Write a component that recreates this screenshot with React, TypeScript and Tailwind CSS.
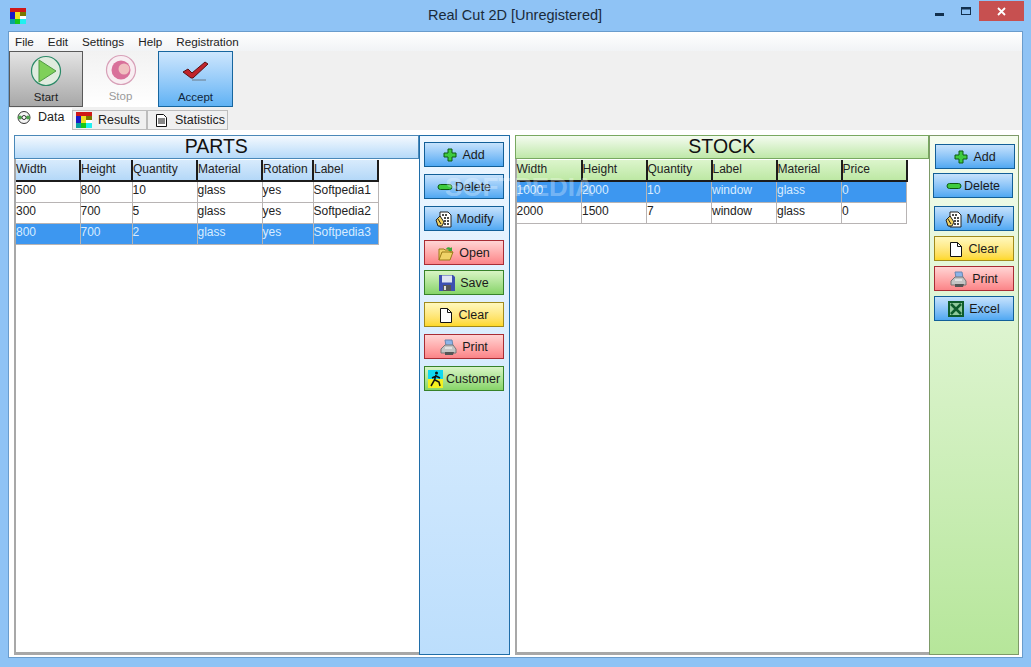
const font = { fontFamily: '"Liberation Sans", Arial, sans-serif' };

const AppLogo = ({ size = 16 }: { size?: number }) => (
  <svg width={size} height={size} viewBox="0 0 16 16" className="shrink-0">
    <rect width="16" height="4" fill="#d01818" />
    <rect y="4" width="5" height="7" fill="#1818c8" />
    <rect x="5" y="4" width="5" height="7" fill="#f0e020" />
    <rect x="10" y="4" width="6" height="4" fill="#787800" />
    <rect x="10" y="8" width="6" height="3" fill="#fff" />
    <rect y="11" width="5" height="5" fill="#08a0a0" />
    <rect x="5" y="11" width="5" height="5" fill="#18c818" />
    <rect x="10" y="11" width="6" height="5" fill="#20f0f0" />
  </svg>
);

const PlusIcon = () => (
  <svg width="14" height="14" viewBox="0 0 14 14">
    <path d="M5 1h4v4h4v4H9v4H5V9H1V5h4z" fill="#3ecb3e" stroke="#0c5a12" strokeWidth="1" strokeLinejoin="round" />
  </svg>
);
const MinusIcon = () => (
  <svg width="16" height="8" viewBox="0 0 16 8">
    <rect x="1" y="1.5" width="14" height="5" rx="2.5" fill="#3ecb3e" stroke="#0c5a12" />
  </svg>
);
const ModifyIcon = () => (
  <svg width="17" height="17" viewBox="0 0 17 17">
    <path d="M5 1h8l3 3v12H5z" fill="#fff" stroke="#222" />
    <path d="M7 4h6M9 7h6M9 10h6M9 13h6" stroke="#111" strokeWidth="1.300" strokeDasharray="2 1" />
    <path d="M1 9l4-4 4 6-2 4H3z" fill="#f0d060" stroke="#222" />
    <path d="M3 8l3 5" stroke="#222" />
  </svg>
);
const OpenIcon = () => (
  <svg width="16" height="15" viewBox="0 0 16 15">
    <path d="M1 3h5l1 1h5v2l3 0-3 8H1z" fill="#f0d268" stroke="#9a7a18" />
    <path d="M1 14l3-8h11" fill="none" stroke="#9a7a18" />
    <path d="M8 3c1-2 3-2 5-1l1-1v4h-4l1-1c-1-1-2-1-3-1z" fill="#3aa83a" />
  </svg>
);
const SaveIcon = () => (
  <svg width="16" height="16" viewBox="0 0 16 16">
    <path d="M0 0h14l2 2v14H0z" fill="#3d4fb0" />
    <rect x="3" y="0.500" width="10" height="7" fill="#dfe4f2" />
    <rect x="4" y="10" width="8" height="6" fill="#555" />
    <rect x="5" y="11" width="2" height="4" fill="#ddd" />
  </svg>
);
const PageIcon = () => (
  <svg width="12" height="15" viewBox="0 0 12 15">
    <path d="M.500.500h7l4 4v10h-11z" fill="#fff" stroke="#111" />
    <path d="M7.500.500v4h4" fill="none" stroke="#111" />
  </svg>
);
const PrintIcon = () => (
  <svg width="17" height="17" viewBox="0 0 17 17">
    <path d="M5 1h7l1 6H6z" fill="#8db4e8" stroke="#6a86b0" />
    <path d="M1 10l4-4h8l3 4v4H1z" fill="#c4c4c4" stroke="#777" />
    <path d="M5 13h9l-1 3H5z" fill="#555" />
    <path d="M5 9h7" stroke="#fff" />
  </svg>
);
const RunnerIcon = () => (
  <svg width="15" height="18" viewBox="0 0 15 18">
    <rect width="15" height="9" fill="#10d8f0" />
    <rect y="9" width="15" height="9" fill="#f4f020" />
    <circle cx="8.500" cy="3" r="1.500" fill="#111" />
    <path d="M8 5L6.500 10 3 16M7 10l4 2 1 4M8 6l4 2M8 6L4 8" stroke="#111" strokeWidth="1.500" fill="none" />
  </svg>
);
const ExcelIcon = () => (
  <svg width="16" height="16" viewBox="0 0 16 16">
    <rect width="16" height="16" fill="#0d5c2c" />
    <rect x="2" y="2" width="12" height="12" fill="#8fc99c" />
    <path d="M3 3l10 10M13 3L3 13" stroke="#0d5c2c" strokeWidth="2.500" />
  </svg>
);

type Tone = "blue" | "red" | "green" | "yellow";

const toneClass: Record<Tone, string> = {
  blue: "border-[#125f98] bg-gradient-to-b from-[#c6e2fc] to-[#4fa8f2]",
  red: "border-[#a82c34] bg-gradient-to-b from-[#ffd4d4] to-[#fb8488]",
  green: "border-[#37822a] bg-gradient-to-b from-[#d8f4c4] to-[#86d468]",
  yellow: "border-[#a08a1c] bg-gradient-to-b from-[#fff8bc] to-[#fed824]",
};

const ActionButton = ({
  label,
  tone,
  icon,
  className = "",
  gap = "gap-[5px]",
}: {
  label: string;
  tone: Tone;
  icon: React.ReactNode;
  className?: string;
  gap?: string;
}) => (
  <button
    className={`flex h-[25px] w-[80px] shrink-0 items-center justify-center border pt-[1px] text-[12.500px] text-[#1a1a1a] ${gap} ${toneClass[tone]} ${className}`}
  >
    {icon}
    <span>{label}</span>
  </button>
);

const ToolButton = ({
  label,
  className,
  labelClass = "text-[#222]",
  children,
}: {
  label: string;
  className: string;
  labelClass?: string;
  children: React.ReactNode;
}) => (
  <div className={`flex h-[56px] flex-col items-center pt-[3px] ${className}`}>
    <div className="flex h-[32px] items-center justify-center">{children}</div>
    <span className={`mt-[3px] text-[11.500px] leading-[14px] ${labelClass}`}>{label}</span>
  </div>
);

const DataTable = ({
  headers,
  rows,
  widths,
  selected,
  headerClass,
}: {
  headers: string[];
  rows: string[][];
  widths: number[];
  selected: number;
  headerClass: string;
}) => (
  <table className="table-fixed border-collapse text-[12px]">
    <colgroup>
      {widths.map((w, i) => (
        <col key={i} style={{ width: w }} />
      ))}
    </colgroup>
    <thead>
      <tr>
        {headers.map((h) => (
          <th
            key={h}
            className={`h-[20px] border-r-2 border-b-2 border-[#1c1c1c] pb-[2px] text-left align-middle font-normal text-[#222] ${headerClass}`}
          >
            {h}
          </th>
        ))}
      </tr>
    </thead>
    <tbody>
      {rows.map((row, r) => (
        <tr key={r}>
          {row.map((c, i) => (
            <td
              key={i}
              className={`h-[21px] border-r border-b border-[#b8b4b4] pb-[3px] leading-none ${
                r === selected ? "bg-[#3d97f0] text-[#d8ecff]" : "bg-white text-[#222]"
              }`}
            >
              {c}
            </td>
          ))}
        </tr>
      ))}
    </tbody>
  </table>
);

export default function App() {
  return (
    <div
      className="flex h-[667px] w-[1031px] flex-col overflow-hidden bg-[#8fc3f5] px-[8px] pb-[9px]"
      style={font}
    >
      <header className="relative flex h-[31px] shrink-0 items-center pl-[2px]">
        <AppLogo />
        <span className="ml-[402px] text-[14.500px] text-[#1a2a3a]">Real Cut 2D [Unregistered]</span>
        <svg width="9" height="4" viewBox="0 0 9 4" className="absolute top-[12px] left-[927px]">
          <rect width="9" height="3" y="1" fill="#12304e" />
        </svg>
        <svg width="10" height="8" viewBox="0 0 10 8" className="absolute top-[7px] left-[953px]">
          <rect x=".500" y=".500" width="9" height="7" fill="none" stroke="#12304e" />
          <rect x=".500" y=".500" width="9" height="2" fill="#12304e" />
        </svg>
        <div className="absolute top-[1px] right-[-1px] flex h-[20px] w-[45px] items-center justify-center bg-[#c75050]">
          <svg width="9" height="9" viewBox="0 0 9 9">
            <path d="M1 1l7 7M8 1L1 8" stroke="#fff" strokeWidth="1.800" />
          </svg>
        </div>
      </header>

      <main className="relative flex min-h-0 flex-1 flex-col border border-[#6a9ccc] bg-white">
        <nav className="flex h-[19px] shrink-0 items-center gap-[14px] bg-gradient-to-b from-white to-[#f1f3f5] pl-[6px] text-[11.700px] text-[#222]">
          <span>File</span>
          <span>Edit</span>
          <span>Settings</span>
          <span>Help</span>
          <span>Registration</span>
        </nav>

        <div className="flex h-[57px] shrink-0 items-start bg-[#f0f0f0]">
          <ToolButton label="Start" className="w-[74px] border border-[#5a5a5a] bg-gradient-to-b from-[#e4e4e4] to-[#a8a8a8]">
            <svg width="32" height="32" viewBox="0 0 32 32">
              <circle cx="16" cy="16" r="14.500" fill="#e0ecdf" stroke="#2c8a68" strokeWidth="1.200" />
              <path d="M9 5l17 11-17 11z" fill="#7fd05a" stroke="#4f9a44" />
            </svg>
          </ToolButton>
          <ToolButton
            label="Stop"
            labelClass="text-[#9a9a9a]"
            className="w-[75px] bg-gradient-to-b from-[#f2f2f2] to-[#ffffff]"
          >
            <svg width="32" height="32" viewBox="0 0 32 32">
              <circle cx="16" cy="16" r="14.500" fill="#f8eef2" stroke="#d8a0b8" strokeWidth="1.200" />
              <circle cx="16" cy="16" r="9.500" fill="#d9709a" />
              <circle cx="19" cy="15" r="5.500" fill="#f0bfc0" />
            </svg>
          </ToolButton>
          <ToolButton
            label="Accept"
            labelClass="text-[#10263c]"
            className="w-[75px] border border-[#17669f] bg-gradient-to-b from-[#cde6fd] to-[#5fb2f4]"
          >
            <svg width="32" height="28" viewBox="0 0 32 28">
              <path d="M3 15l5-3 4 4L25 5l3 2-15 14h-2z" fill="#c0242c" stroke="#5a1014" />
              <path d="M12 23h14" stroke="#6a7a88" />
            </svg>
          </ToolButton>
        </div>

        <div className="flex h-[22px] shrink-0 items-end bg-[#f0f0f0] text-[12.500px]">
          <div className="flex h-[22px] w-[63px] items-center gap-[6px] bg-white pb-[4px] pl-[7px] text-[#222]">
            <svg width="16" height="13" viewBox="0 0 15 13">
              <circle cx="7.500" cy="6.500" r="6" fill="#f4f4f4" stroke="#333" />
              <circle cx="3.500" cy="6.500" r="2" fill="#4ba34b" />
              <circle cx="11.500" cy="6.500" r="2" fill="#4ba34b" />
              <circle cx="7.500" cy="6.500" r="2" fill="#fff" stroke="#333" />
            </svg>
            Data
          </div>
          <div className="flex h-[20px] w-[75px] items-center gap-[6px] border border-[#bdbdbd] bg-[#f0f0f0] pl-[3px] text-[#222]">
            <AppLogo />
            Results
          </div>
          <div className="flex h-[20px] w-[81px] items-center gap-[8px] border border-[#bdbdbd] bg-[#f0f0f0] pl-[8px] text-[#222]">
            <svg width="11" height="13" viewBox="0 0 11 13">
              <path d="M.500.500h7l3 3v9h-10z" fill="#fff" stroke="#111" />
              <path d="M2 5h7M2 7h7M2 9h7" stroke="#111" />
            </svg>
            Statistics
          </div>
        </div>

        <section className="flex min-h-0 flex-1 pt-[5px] pr-[3px] pb-[2px] pl-[5px]">
          <div className="flex w-[405px] flex-col border-b-[3px] border-l-2 border-[#a8a8a8] bg-white">
            <div className="-ml-[2px] flex h-[24px] shrink-0 items-center justify-center border border-[#4a88b8] bg-gradient-to-b from-[#f4f9fe] to-[#b6daf9] text-[19.500px] text-[#111]">
              PARTS
            </div>
            <div className="pt-[1px]">
              <DataTable
                headers={["Width", "Height", "Quantity", "Material", "Rotation", "Label"]}
                widths={[64, 52, 65, 65, 51, 65]}
                selected={2}
                headerClass="bg-gradient-to-b from-[#d8ebfc] to-[#b4d8f8]"
                rows={[
                  ["500", "800", "10", "glass", "yes", "Softpedia1"],
                  ["300", "700", "5", "glass", "yes", "Softpedia2"],
                  ["800", "700", "2", "glass", "yes", "Softpedia3"],
                ]}
              />
            </div>
          </div>

          <aside className="flex w-[91px] shrink-0 flex-col items-center border border-[#1f6da8] bg-gradient-to-b from-[#eef7ff] to-[#bcdefc] pt-[6px]">
            <ActionButton label="Add" tone="blue" icon={<PlusIcon />} />
            <ActionButton label="Delete" tone="blue" icon={<MinusIcon />} className="mt-[7px]" gap="gap-[2px]" />
            <ActionButton label="Modify" tone="blue" icon={<ModifyIcon />} className="mt-[7px]" />
            <ActionButton label="Open" tone="red" icon={<OpenIcon />} className="mt-[9px]" />
            <ActionButton label="Save" tone="green" icon={<SaveIcon />} className="mt-[5px]" />
            <ActionButton label="Clear" tone="yellow" icon={<PageIcon />} className="mt-[7px]" gap="gap-[7px]" />
            <ActionButton label="Print" tone="red" icon={<PrintIcon />} className="mt-[7px]" />
            <ActionButton label="Customer" tone="green" icon={<RunnerIcon />} className="mt-[7px]" gap="gap-[3px]" />
          </aside>

          <div className="ml-[5px] flex w-[415px] flex-col border-b-[3px] border-l-2 border-[#a8a8a8] bg-white">
            <div className="-ml-[2px] flex h-[24px] shrink-0 items-center justify-center border border-[#78a860] bg-gradient-to-b from-[#f4fbf0] to-[#bfe8a8] text-[19.500px] text-[#111]">
              STOCK
            </div>
            <div className="pt-[1px]">
              <DataTable
                headers={["Width", "Height", "Quantity", "Label", "Material", "Price"]}
                widths={[65, 65, 65, 65, 65, 65]}
                selected={0}
                headerClass="bg-gradient-to-b from-[#dcf5cc] to-[#bde8a4]"
                rows={[
                  ["1000", "2000", "10", "window", "glass", "0"],
                  ["2000", "1500", "7", "window", "glass", "0"],
                ]}
              />
            </div>
          </div>

          <aside className="flex w-[90px] shrink-0 flex-col border border-[#7d9a68] bg-gradient-to-b from-[#f4fcee] to-[#b6e69a] pt-[8px] pl-[4px]">
            <ActionButton label="Add" tone="blue" icon={<PlusIcon />} className="ml-[1px]" />
            <ActionButton label="Delete" tone="blue" icon={<MinusIcon />} className="-ml-[1px] mt-[4px]" gap="gap-[2px]" />
            <ActionButton label="Modify" tone="blue" icon={<ModifyIcon />} className="mt-[8px]" />
            <ActionButton label="Clear" tone="yellow" icon={<PageIcon />} className="mt-[5px]" gap="gap-[7px]" />
            <ActionButton label="Print" tone="red" icon={<PrintIcon />} className="mt-[5px]" />
            <ActionButton label="Excel" tone="blue" icon={<ExcelIcon />} className="mt-[5px]" />
          </aside>
        </section>

        {/* softpedia watermark across the middle of the window */}
        <span className="pointer-events-none absolute top-[142px] left-[436px] text-[26px] leading-none font-bold whitespace-nowrap text-white/30">
          SOFTPEDIA
        </span>
      </main>
    </div>
  );
}
